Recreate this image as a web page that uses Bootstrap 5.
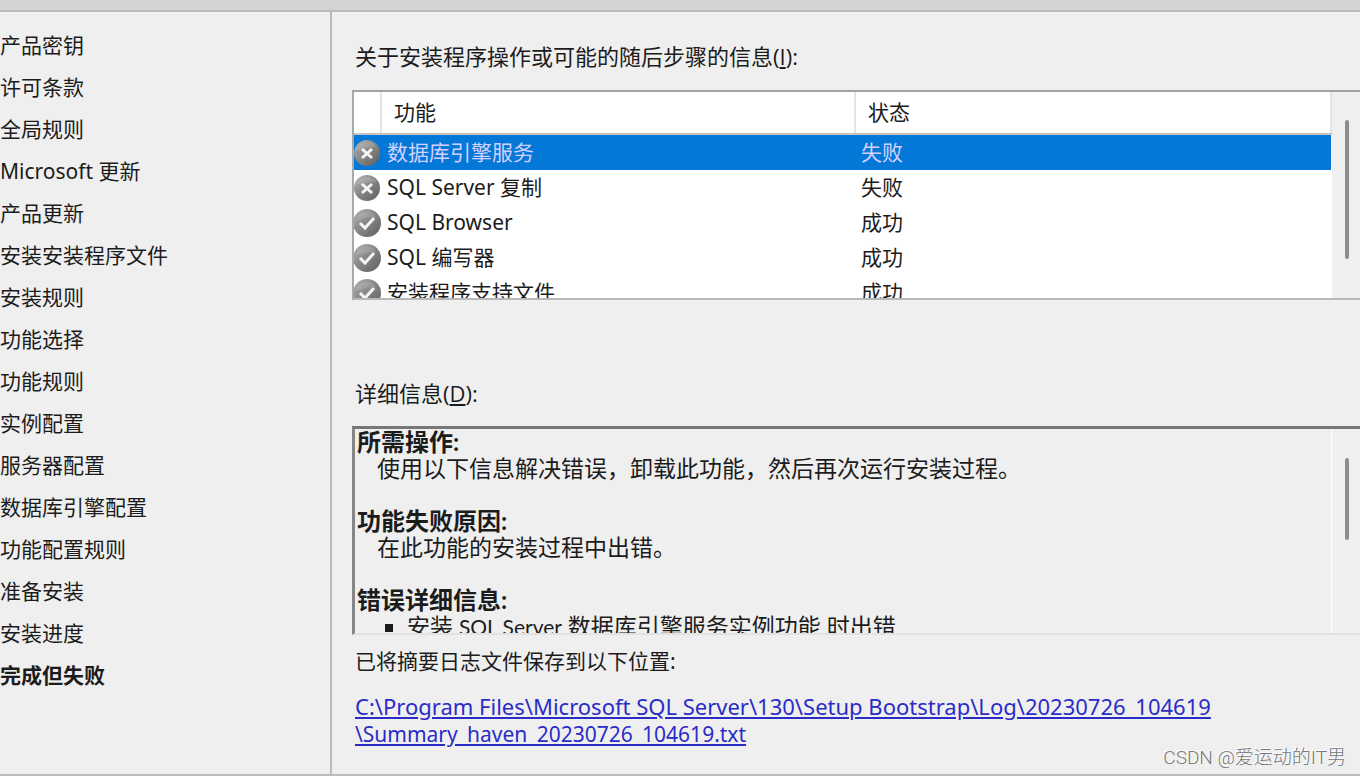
<!DOCTYPE html>
<html lang="zh-CN">
<head>
<meta charset="utf-8">
<meta name="viewport" content="width=device-width, initial-scale=1">
<title>SQL Server 安装程序</title>
<link href="https://cdn.jsdelivr.net/npm/bootstrap@5.3.0/dist/css/bootstrap.min.css" rel="stylesheet">
<style>
  body { font-family: "Noto Sans", "Noto Sans CJK SC", sans-serif; font-size: 21px; line-height: 26px; color: #1c1c1c; background: #efefef; }
  .title-strip { height: 12px; background: #d5d4d2; border-bottom: 2px solid #bababa; }
  .wizard { border-bottom: 2px solid #bcbcbc; }
  .steps { width: 332px; padding-top: 12px; border-right: 2px solid #bbb; line-height: 42px; }
  .content { padding: 31px 0 16px 20px; min-width: 0; }
  .caption-text { font-family: "Open Sans", "Noto Sans CJK SC", sans-serif; font-size: 22px; padding-left: 3px; }
  .feature-box { height: 210px; margin-top: 21px; border-top: 2px solid #a0a4a4; border-bottom: 2px solid #b8b8b8; border-left: 2px solid #a6aaaa; }
  .feature-list { overflow: hidden; background: #fff; }
  .feature-table { width: 100%; table-layout: fixed; }
  .feature-table th { height: 42px; font-weight: 400; border-bottom: 2px solid #c4c4c4; border-right: 2px solid #e4e4e4; padding: 0 0 2px 12px; }
  .feature-table td { height: 35px; padding: 0; line-height: 35px; white-space: nowrap; }
  .feature-table td + td { padding-left: 6px; }
  .feature-table .chosen td { background: #0478d7; color: #d3d0ff; }
  .col-icon { width: 27px; }
  .col-name { width: 474px; }
  .state-icon { width: 28px; height: 28px; display: block; margin-left: -1px; }
  .scroll-track { width: 28px; flex: none; }
  .scroll-thumb { width: 4px; margin-left: 13px; border-radius: 2px; background: #8d8d8d; }
  .thumb-long { height: 139px; margin-top: 28px; }
  .thumb-short { height: 82px; margin-top: 29px; }
  .details-caption { margin-top: 80px; }
  .details-box { height: 209px; margin-top: 20px; border-top: 3px solid #777; border-left: 3px solid #858585; border-bottom: 2px solid #e2e2e2; }
  .details-text { overflow: hidden; font-size: 23px; padding-left: 2px; border-right: 1px solid #fff; font-family: Lato, "Noto Sans CJK SC", sans-serif; }
  .details-text h2 { font-size: 24px; line-height: 26px; font-weight: 700; margin: 0; }
  .details-text p { margin: 0 0 27px; padding-left: 20px; }
  .details-text ul { list-style: square; padding-left: 50px; }
  .product { font-size: 21px; }
  .log-caption { padding-left: 3px; margin-top: 13px; }
  .log-link { margin: 19px 0 0 3px; line-height: 27px; }
  .log-link a { color: #2a2cc8; }
  .log-folder { font-size: 22px; }
  .watermark { right: 14px; bottom: 5px; font-family: Roboto, "Noto Sans CJK SC", sans-serif; font-weight: 300; font-size: 19px; color: #777; text-shadow: -1px -1px 0 #fff; }
</style>
</head>
<body>
<svg class="position-absolute" width="0" height="0" aria-hidden="true">
  <defs>
    <linearGradient id="ball" x1="0" y1="0" x2="1" y2="1"><stop offset="0" stop-color="#b4b4b4"/><stop offset=".5" stop-color="#858585"/><stop offset="1" stop-color="#5d5d5d"/></linearGradient>
  </defs>
  <symbol id="failed" viewBox="0 0 28 28"><circle cx="14" cy="14" r="13" fill="url(#ball)"/><path d="M3 11a11.500 11.500 0 0 1 21-2C17 6 10 11 3 11z" fill="#fff" opacity=".13"/><path d="M9 10l10 9M19 10L9 19" stroke="#f5f5f5" stroke-width="3"/></symbol>
  <symbol id="passed" viewBox="0 0 28 28"><circle cx="14" cy="14" r="14" fill="url(#ball)"/><path d="M3 11a11.500 11.500 0 0 1 21-2C17 6 10 11 3 11z" fill="#fff" opacity=".13"/><path d="M7 14l5 5L21 9" fill="none" stroke="#f5f5f5" stroke-width="3"/></symbol>
</svg>
<div class="min-vh-100 d-flex flex-column position-relative">
  <div class="title-strip"></div>
  <div class="wizard d-flex flex-grow-1">
    <nav class="steps flex-shrink-0" aria-label="安装步骤">
      <ol class="list-unstyled mb-0">
        <li>产品密钥</li>
        <li>许可条款</li>
        <li>全局规则</li>
        <li>Microsoft 更新</li>
        <li>产品更新</li>
        <li>安装安装程序文件</li>
        <li>安装规则</li>
        <li>功能选择</li>
        <li>功能规则</li>
        <li>实例配置</li>
        <li>服务器配置</li>
        <li>数据库引擎配置</li>
        <li>功能配置规则</li>
        <li>准备安装</li>
        <li>安装进度</li>
        <li class="fw-bold" aria-current="step">完成但失败</li>
      </ol>
    </nav>
    <main class="content flex-grow-1">
      <div class="caption-text" id="feature-caption">关于安装程序操作或可能的随后步骤的信息(<u>I</u>):</div>
      <div class="feature-box d-flex">
        <div class="feature-list flex-grow-1">
          <table class="feature-table" aria-labelledby="feature-caption">
            <colgroup><col class="col-icon"><col class="col-name"><col></colgroup>
            <thead><tr><th></th><th>功能</th><th>状态</th></tr></thead>
            <tbody>
              <tr class="chosen"><td><svg class="state-icon"><use href="#failed"/></svg></td><td>数据库引擎服务</td><td>失败</td></tr>
              <tr><td><svg class="state-icon"><use href="#failed"/></svg></td><td>SQL Server 复制</td><td>失败</td></tr>
              <tr><td><svg class="state-icon"><use href="#passed"/></svg></td><td>SQL Browser</td><td>成功</td></tr>
              <tr><td><svg class="state-icon"><use href="#passed"/></svg></td><td>SQL 编写器</td><td>成功</td></tr>
              <tr><td><svg class="state-icon"><use href="#passed"/></svg></td><td>安装程序支持文件</td><td>成功</td></tr>
            </tbody>
          </table>
        </div>
        <div class="scroll-track"><div class="scroll-thumb thumb-long"></div></div>
      </div>
      <div class="caption-text details-caption" id="details-caption">详细信息(<u>D</u>):</div>
      <section class="details-box d-flex" aria-labelledby="details-caption">
        <div class="details-text flex-grow-1">
          <h2>所需操作:</h2>
          <p>使用以下信息解决错误，卸载此功能，然后再次运行安装过程。</p>
          <h2>功能失败原因:</h2>
          <p>在此功能的安装过程中出错。</p>
          <h2>错误详细信息:</h2>
          <ul><li>安装 <span class="product">SQL Server</span> 数据库引擎服务实例功能 时出错</li></ul>
        </div>
        <div class="scroll-track"><div class="scroll-thumb thumb-short"></div></div>
      </section>
      <div class="log-caption">已将摘要日志文件保存到以下位置:</div>
      <div class="log-link"><a href="#"><span class="log-folder">C:\Program Files\Microsoft SQL Server\130\Setup Bootstrap\Log\20230726_104619</span><br>\Summary_haven_20230726_104619.txt</a></div>
    </main>
  </div>
  <div class="watermark position-absolute">CSDN @爱运动的IT男</div>
</div>
<script src="https://cdn.jsdelivr.net/npm/bootstrap@5.3.0/dist/js/bootstrap.bundle.min.js"></script>
</body>
</html>
